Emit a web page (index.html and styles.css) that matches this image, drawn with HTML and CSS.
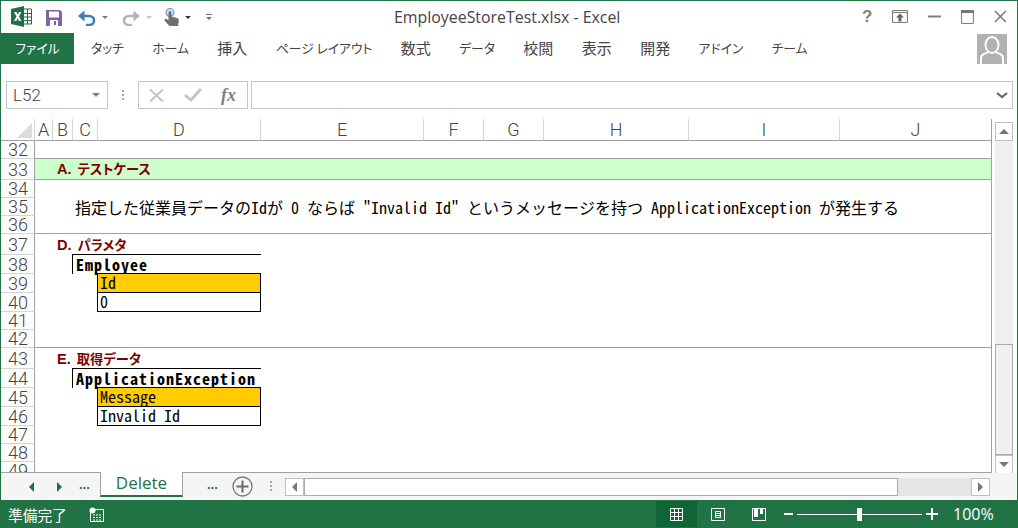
FILE: index.html

```html
<!DOCTYPE html>
<html lang="ja">
<head>
  <meta charset="UTF-8">
  <title>EmployeeStoreTest.xlsx - Excel</title>
  <link rel="stylesheet" href="styles.css">
</head>
<body>
  <div class="window">

    <div class="titlebar">
      <div class="qat">
        <svg class="ic-excel" width="21" height="21" viewBox="0 0 21 21">
          <path d="M0 3 L13 0 V21 L0 18Z" fill="#1d7044"/>
          <path d="M13 3H20.500V18H13" fill="#fff" stroke="#1d7044"/>
          <path d="M13 7.500H20M13 11H20M13 14.500H20M16.500 3V18" stroke="#1d7044" fill="none"/>
          <path d="M3 6H5.500L6.800 8.800L8 6H10.300L8 10.500L10.400 15H8L6.600 12.200L5.300 15H3L5.500 10.500Z" fill="#fff"/>
        </svg>
        <svg class="ic-save" width="16" height="16" viewBox="0 0 16 16">
          <path d="M0 0H14L16 2V16H0Z" fill="#8561a8"/>
          <rect x="3" y="1.500" width="10" height="6" fill="#fff"/>
          <rect x="4" y="10" width="8" height="6" fill="#fff"/>
          <rect x="8" y="11" width="2" height="4" fill="#8561a8"/>
        </svg>
        <svg class="ic-undo" width="18" height="16" viewBox="0 0 18 16">
          <path d="M2 6H11C14 6 16 8 16 10.500C16 13 14 15 11 15H8" fill="none" stroke="#3f7db8" stroke-width="2.600"/>
          <path d="M6.500 0.500V11.500L0 6Z" fill="#3f7db8"/>
        </svg>
        <span class="caret"></span>
        <svg class="ic-redo" width="18" height="16" viewBox="0 0 18 16">
          <path d="M16 6H7C4 6 2 8 2 10.500C2 13 4 15 7 15H10" fill="none" stroke="#b4b4b4" stroke-width="2.600"/>
          <path d="M11.500 0.500V11.500L18 6Z" fill="#b4b4b4"/>
        </svg>
        <span class="caret light"></span>
        <svg class="ic-touch" width="18" height="18" viewBox="0 0 18 18">
          <circle cx="7" cy="4.500" r="4" fill="#cfe0f0" stroke="#6d9fcf" stroke-width="1.200"/>
          <path d="M5.500 4.500C5.500 2.800 8.500 2.800 8.500 4.500V8.500L14 10C15.500 10.500 16 11.500 15.800 13L15 18H6.500L1.500 12.500C1 11.500 2.500 10 3.800 11L5.500 12.500Z" fill="#6f6f6f"/>
        </svg>
        <span class="caret dark"></span>
        <span class="customize"></span>
      </div>
      <div class="doc-title">EmployeeStoreTest.xlsx - Excel</div>
      <div class="winctl">
        <span class="help">?</span>
        <svg width="16" height="13" viewBox="0 0 16 13">
          <path d="M0.500 0.500H15.500V12.500H0.500ZM1 2.500H15" fill="none" stroke="#777"/>
          <path d="M8 3.500L12 7.500H9.500V11.500H6.500V7.500H4Z" fill="#666"/>
        </svg>
        <svg width="13" height="3" viewBox="0 0 13 3"><rect width="13" height="2" y="0.500" fill="#808080"/></svg>
        <svg width="13" height="14" viewBox="0 0 13 14"><path d="M0.500 0.500H12.500V13.500H0.500Z" fill="none" stroke="#777"/><rect width="13" height="3" fill="#777"/></svg>
        <svg width="13" height="13" viewBox="0 0 13 13"><path d="M1 1L12 12M12 1L1 12" stroke="#777" stroke-width="1.500" fill="none"/></svg>
      </div>
    </div>

    <div class="ribbon">
      <div class="tab-file">ファイル</div>
      <div class="ribbon-tabs">
        <span>タッチ</span>
        <span>ホーム</span>
        <span class="kanji">挿入</span>
        <span>ページ レイアウト</span>
        <span class="kanji">数式</span>
        <span>データ</span>
        <span class="kanji">校閲</span>
        <span class="kanji">表示</span>
        <span class="kanji">開発</span>
        <span>アドイン</span>
        <span>チーム</span>
      </div>
      <svg class="avatar" width="30" height="30" viewBox="0 0 30 30">
        <rect width="30" height="30" fill="#b1b1b1"/>
        <ellipse cx="15" cy="11" rx="6.500" ry="8" fill="none" stroke="#fff" stroke-width="2"/>
        <path d="M4 30V24C4 21 7 19.500 11 18.500M26 30V24C26 21 23 19.500 19 18.500" fill="none" stroke="#fff" stroke-width="2"/>
      </svg>
    </div>

    <div class="formula">
      <div class="namebox">L52<span class="caret gray"></span></div>
      <div class="dots"></div>
      <div class="fx-btns">
        <svg width="15" height="13" viewBox="0 0 15 13"><path d="M1 0.500L14 12.500M14 0.500L1 12.500" stroke="#c4c4c4" stroke-width="2" fill="none"/></svg>
        <svg width="18" height="14" viewBox="0 0 18 14"><path d="M1 7L7 12L17 1" stroke="#c4c4c4" stroke-width="2.800" fill="none"/></svg>
        <span class="fx">fx</span>
      </div>
      <div class="fx-input">
        <svg width="12" height="7" viewBox="0 0 12 7"><path d="M1 1L6 5L11 1" stroke="#666" stroke-width="2.200" fill="none"/></svg>
      </div>
    </div>

    <div class="sheet">
      <div class="grid">
        <div class="corner"><svg width="15" height="15" viewBox="0 0 15 15"><path d="M15 0V15H0Z" fill="#dcdcdc"/></svg></div>
        <div class="colhead">A</div>
        <div class="colhead">B</div>
        <div class="colhead">C</div>
        <div class="colhead">D</div>
        <div class="colhead">E</div>
        <div class="colhead">F</div>
        <div class="colhead">G</div>
        <div class="colhead">H</div>
        <div class="colhead">I</div>
        <div class="colhead last">J</div>

        <div class="rowhead">32</div><div class="row ruled"></div>
        <div class="rowhead">33</div><div class="row ruled band"><span class="heading"><span class="mark">A.</span>テストケース</span></div>
        <div class="rowhead">34</div><div class="row"></div>
        <div class="rowhead">35</div><div class="row"><span class="desc">指定した従業員データのIdが 0 ならば "Invalid Id" というメッセージを持つ ApplicationException が発生する</span></div>
        <div class="rowhead">36</div><div class="row ruled"></div>
        <div class="rowhead">37</div><div class="row"><span class="heading"><span class="mark">D.</span>パラメタ</span></div>
        <div class="rowhead">38</div><div class="row"><div class="tbl-head">Employee</div></div>
        <div class="rowhead">39</div><div class="row"><div class="tbl-cell key">Id</div></div>
        <div class="rowhead">40</div><div class="row"><div class="tbl-cell">0</div></div>
        <div class="rowhead">41</div><div class="row"></div>
        <div class="rowhead">42</div><div class="row ruled"></div>
        <div class="rowhead">43</div><div class="row"><span class="heading"><span class="mark">E.</span>取得データ</span></div>
        <div class="rowhead">44</div><div class="row"><div class="tbl-head">ApplicationException</div></div>
        <div class="rowhead">45</div><div class="row"><div class="tbl-cell key">Message</div></div>
        <div class="rowhead">46</div><div class="row"><div class="tbl-cell">Invalid Id</div></div>
        <div class="rowhead">47</div><div class="row"></div>
        <div class="rowhead">48</div><div class="row"></div>
        <div class="rowhead">49</div><div class="row"></div>
      </div>
      <div class="vscroll">
        <div class="sb-btn"><span class="tri up"></span></div>
        <div class="sb-track"><div class="sb-thumb"></div></div>
        <div class="sb-btn"><span class="tri down"></span></div>
      </div>
    </div>

    <div class="tabbar">
      <span class="nav tri-l"></span>
      <span class="nav tri-r"></span>
      <span class="more first">...</span>
      <div class="sheet-tab">Delete</div>
      <span class="more second">...</span>
      <svg class="add" width="21" height="21" viewBox="0 0 21 21">
        <circle cx="10.500" cy="10.500" r="9.500" fill="none" stroke="#7a7a7a" stroke-width="1.300"/>
        <path d="M10.500 4.500V16.500M4.500 10.500H16.500" stroke="#6a6a6a" stroke-width="2" fill="none"/>
      </svg>
      <div class="dots small"></div>
      <div class="hscroll">
        <div class="sb-btn wide"><span class="tri left"></span></div>
        <div class="h-thumb"></div>
        <div class="h-rest"></div>
        <div class="sb-btn wide"><span class="tri right"></span></div>
      </div>
    </div>

    <div class="status">
      <span class="ready">準備完了</span>
      <svg class="macro" width="15" height="15" viewBox="0 0 15 15">
        <rect x="1.500" y="2.500" width="13" height="12" fill="none" stroke="#fff"/>
        <circle cx="3.500" cy="3.500" r="3" fill="#fff"/>
        <path d="M4 8H13M4 10.500H13M4 13H13" stroke="#fff" stroke-dasharray="2 1" fill="none"/>
      </svg>
      <div class="views">
        <div class="view active">
          <svg width="13" height="13" viewBox="0 0 13 13"><path d="M0.500 0.500H12.500V12.500H0.500ZM0.500 4.500H12.500M0.500 8.500H12.500M4.500 0.500V12.500M8.500 0.500V12.500" fill="none" stroke="#fff"/></svg>
        </div>
        <div class="view">
          <svg width="14" height="13" viewBox="0 0 14 13"><path d="M0.500 0.500H13.500V12.500H0.500ZM4.500 3.500H9.500V9.500H4.500ZM5 5.500H9M5 7.500H9" fill="none" stroke="#fff"/></svg>
        </div>
        <div class="view">
          <svg width="14" height="13" viewBox="0 0 14 13"><path d="M0.500 0.500H13.500V12.500H0.500Z" fill="none" stroke="#fff"/><path d="M2 1H6V9H2ZM8 1H11V6H8Z" fill="#fff"/></svg>
        </div>
      </div>
      <div class="zoom">
        <span class="z-minus"></span>
        <div class="z-track"><span class="z-thumb"></span></div>
        <svg width="12" height="12" viewBox="0 0 12 12"><path d="M6 0V12M0 6H12" stroke="#fff" stroke-width="2" fill="none"/></svg>
      </div>
      <span class="pct">100%</span>
    </div>
  </div>
</body>
</html>
```

FILE: styles.css

```css
* {
  box-sizing: border-box;
}

body {
  margin: 0;
  background-color: #fff;
  font-family: 'Noto Sans CJK JP', sans-serif;
  overflow: hidden;
}

.window {
  width: 1018px;
  height: 528px;
  border-top: 1px solid #217346;
  border-left: 1px solid #217346;
  border-right: 1px solid #217346;
  display: flex;
  flex-direction: column;
  overflow: hidden;
}

/* title bar */
.titlebar {
  height: 32px;
  flex: none;
  display: flex;
  align-items: center;
}

.qat {
  width: 380px;
  height: 32px;
  display: flex;
  align-items: center;
  flex: none;
}

.ic-excel {
  margin-left: 10px;
  margin-top: -2px;
}

.ic-save {
  margin-left: 14px;
  margin-top: 2px;
}

.ic-undo {
  margin-left: 16px;
  margin-top: 2px;
}

.caret {
  width: 0;
  height: 0;
  border-left: 3px solid transparent;
  border-right: 3px solid transparent;
  border-top: 3px solid #777;
  margin-left: 6px;
  margin-top: 1px;
}

.caret.light {
  border-top-color: #c4c4c4;
}

.caret.dark {
  border-top-color: #333;
  margin-left: 4px;
}

.caret.gray {
  border-left-width: 4px;
  border-right-width: 4px;
  border-top-width: 4px;
  border-top-color: #808080;
  margin: 0;
}

.ic-redo {
  margin-left: 14px;
  margin-top: 2px;
}

.ic-touch {
  margin-left: 11px;
}

.customize {
  width: 6px;
  height: 6px;
  margin-left: 15px;
  border-top: 1px solid #777;
  position: relative;
}

.customize::after {
  content: "";
  position: absolute;
  left: 0;
  top: 2px;
  border-left: 3px solid transparent;
  border-right: 3px solid transparent;
  border-top: 3px solid #777;
}

.doc-title {
  flex: 1;
  font-family: 'Open Sans', sans-serif;
  font-size: 15.9px;
  color: #444;
  padding-left: 13px;
  white-space: nowrap;
}

.winctl {
  width: 155px;
  flex: none;
  padding-right: 10px;
  display: flex;
  align-items: center;
  justify-content: flex-end;
  gap: 20px;
  margin-top: -1px;
}

.help {
  font-family: 'Liberation Sans', sans-serif;
  font-weight: bold;
  font-size: 17px;
  color: #808080;
}

/* ribbon tabs */
.ribbon {
  height: 31px;
  flex: none;
  display: flex;
  align-items: center;
}

.tab-file {
  width: 73px;
  height: 31px;
  background-color: #217346;
  color: #fff;
  font-size: 12.8px;
  font-feature-settings: "palt";
  text-align: center;
  line-height: 30px;
}

.ribbon-tabs {
  display: flex;
  align-items: center;
  gap: 28.4px;
  padding-left: 17px;
  padding-bottom: 2px;
  height: 24px;
  font-size: 12.8px;
  font-feature-settings: "palt";
  color: #444;
  white-space: nowrap;
  flex: 1;
}

.ribbon-tabs .kanji {
  font-size: 15px;
}

.avatar {
  margin-right: 10px;
  flex: none;
}

/* formula bar */
.formula {
  height: 55px;
  flex: none;
  padding: 17px 4px 10px 5px;
  display: flex;
}

.namebox {
  width: 102px;
  border: 1px solid #c6c6c6;
  display: flex;
  align-items: center;
  justify-content: space-between;
  padding: 0 7px 0 6px;
  font-family: 'Roboto', sans-serif;
  font-weight: 300;
  font-size: 17px;
  color: #444;
}

.dots {
  width: 2px;
  height: 11px;
  margin: 9px 14px 0 14px;
  background-image: repeating-linear-gradient(to bottom, #a8a8a8 0, #a8a8a8 2px, transparent 2px, transparent 4px);
}

.fx-btns {
  width: 110px;
  border: 1px solid #c6c6c6;
  display: flex;
  align-items: center;
  padding-left: 10px;
  gap: 20px;
}

.fx {
  font-family: 'Liberation Serif', serif;
  font-style: italic;
  font-weight: bold;
  font-size: 18px;
  color: #808080;
  margin-left: -1px;
}

.fx-input {
  flex: 1;
  margin-left: 3px;
  border: 1px solid #c6c6c6;
  display: flex;
  align-items: center;
  justify-content: flex-end;
  padding-right: 4px;
}

/* sheet */
.sheet {
  height: 354px;
  flex: none;
  display: flex;
}

.grid {
  width: 991px;
  height: 354px;
  flex: none;
  overflow: hidden;
  border-bottom: 1px solid #a0a0a0;
  border-right: 1px solid #a0a0a0;
  display: grid;
  grid-template-columns: 34px 18px 20px 25px 163px 163px 60px 60px 145px 151px 151px;
  grid-template-rows: 22px 18px 21px 18px 18px 18px 21px 19px 19px 19px 18px 18px 21px 19px 19px 19px 18px 18px 18px;
}

.corner {
  border-right: 1px solid #d4d4d4;
  border-bottom: 1px solid #a0a0a0;
  display: flex;
  align-items: flex-end;
  justify-content: flex-end;
  padding: 0 2px 2px 0;
}

.colhead {
  border-right: 1px solid #d4d4d4;
  border-bottom: 1px solid #a0a0a0;
  font-family: 'Roboto', sans-serif;
  font-weight: 300;
  font-size: 18px;
  line-height: 22px;
  color: #444;
  text-align: center;
}

.colhead.last {
  border-right: 0;
}

.rowhead {
  border-right: 1px solid #a0a0a0;
  border-bottom: 1px solid #d4d4d4;
  font-family: 'Roboto', sans-serif;
  font-weight: 300;
  font-size: 18px;
  line-height: 17px;
  color: #444;
  text-align: center;
  display: flex;
  align-items: center;
  justify-content: center;
  padding-left: 1px;
}

.row {
  grid-column: span 10;
  white-space: nowrap;
  display: flex;
  align-items: center;
  min-width: 0;
}

.row.ruled {
  border-bottom: 1px solid #a0a0a0;
}

.row.band {
  background-color: #ccffcc;
}

.heading {
  margin-left: 22px;
  font-family: 'Noto Sans CJK JP', sans-serif;
  font-weight: bold;
  font-size: 13.3px;
  font-feature-settings: "palt";
  line-height: 17px;
  color: #800000;
}

.mark {
  font-family: 'Liberation Sans', sans-serif;
  font-size: 14.6px;
  margin-right: 6px;
}

.desc,
.tbl-head,
.tbl-cell {
  font-family: 'Noto Sans Mono CJK JP', 'Noto Sans CJK JP', monospace;
  font-size: 16px;
  color: #000;
}

.desc {
  margin-left: 40px;
  line-height: 18px;
}

.tbl-head {
  margin-left: 37px;
  margin-top: -1px;
  width: 189px;
  height: 20px;
  line-height: 18px;
  padding-left: 3px;
  border-left: 1px solid #000;
  border-top: 1px solid #000;
  font-weight: bold;
  letter-spacing: 1px;
}

.tbl-cell {
  margin-left: 62px;
  margin-top: -1px;
  width: 164px;
  height: 20px;
  line-height: 17px;
  padding-left: 2px;
  border: 1px solid #000;
  background-color: #fff;
}

.tbl-cell.key {
  background-color: #ffcc00;
}

/* scroll bars */
.vscroll {
  flex: 1;
  padding: 3px 4px 0 3px;
  display: flex;
  flex-direction: column;
}

.sb-btn {
  width: 18px;
  height: 19px;
  flex: none;
  border: 1px solid #bfbfbf;
  background-color: #fff;
  display: flex;
  align-items: center;
  justify-content: center;
}

.sb-track {
  height: 314px;
  background-color: #f0f0f0;
  padding-top: 203px;
}

.sb-thumb {
  height: 111px;
  background-color: #f0f0f0;
  border: 1px solid #ababab;
}

.tri {
  width: 0;
  height: 0;
}

.tri.up {
  border-left: 5px solid transparent;
  border-right: 5px solid transparent;
  border-bottom: 5px solid #777;
}

.tri.down {
  border-left: 5px solid transparent;
  border-right: 5px solid transparent;
  border-top: 5px solid #777;
}

.tri.left {
  border-top: 5px solid transparent;
  border-bottom: 5px solid transparent;
  border-right: 5px solid #777;
}

.tri.right {
  border-top: 5px solid transparent;
  border-bottom: 5px solid transparent;
  border-left: 5px solid #777;
}

/* sheet tabs */
.tabbar {
  height: 27px;
  flex: none;
  background-color: #f5f5f5;
  display: flex;
  align-items: center;
}

.nav {
  width: 0;
  height: 0;
  border-top: 5px solid transparent;
  border-bottom: 5px solid transparent;
}

.nav.tri-l {
  border-right: 5px solid #1e6f43;
  margin-left: 28px;
}

.nav.tri-r {
  border-left: 5px solid #1e6f43;
  margin-left: 23px;
}

.more {
  font-family: 'Liberation Sans', sans-serif;
  font-weight: bold;
  font-size: 13px;
  color: #1e6f43;
  margin-top: -5px;
}

.more.first {
  margin-left: 17px;
  width: 21px;
}

.more.second {
  margin-left: 24px;
}

.sheet-tab {
  width: 83px;
  height: 25px;
  margin-top: -1px;
  align-self: flex-start;
  background-color: #fff;
  border-left: 1px solid #a0a0a0;
  border-right: 1px solid #a0a0a0;
  border-bottom: 2px solid #217346;
  color: #217346;
  font-family: 'Open Sans', sans-serif;
  font-size: 17px;
  line-height: 21px;
  text-align: center;
}

.add {
  margin-left: 14px;
}

.dots.small {
  margin: 0 13px 0 17px;
}

.hscroll {
  width: 705px;
  height: 18px;
  display: flex;
}

.sb-btn.wide {
  width: 19px;
  height: 18px;
}

.h-thumb {
  width: 594px;
  background-color: #fff;
  border: 1px solid #ababab;
}

.h-rest {
  flex: 1;
  background-color: #e6e6e6;
}

/* status bar */
.status {
  height: 28px;
  flex: none;
  margin: 0 -1px;
  background-color: #217346;
  color: #fff;
  display: flex;
  align-items: center;
  position: relative;
}

.ready {
  margin-left: 8px;
  font-size: 14.7px;
  width: 81px;
}

.macro {
  flex: none;
}

.views {
  margin-left: 552px;
  display: flex;
  height: 26px;
}

.view {
  width: 41px;
  display: flex;
  align-items: center;
  justify-content: center;
}

.view.active {
  background-color: #0f6535;
}

.zoom {
  margin-left: 5px;
  display: flex;
  align-items: center;
}

.z-minus {
  width: 9px;
  height: 2px;
  background-color: #fff;
}

.z-track {
  width: 125px;
  height: 1px;
  margin: 0 4px;
  background-color: #fff;
  position: relative;
}

.z-thumb {
  position: absolute;
  left: 60px;
  top: -6px;
  width: 5px;
  height: 13px;
  background-color: #fff;
}

.pct {
  margin-left: 15px;
  font-family: 'Open Sans', sans-serif;
  font-size: 16px;
}
```
